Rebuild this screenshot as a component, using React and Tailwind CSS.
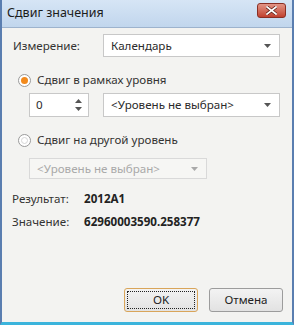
import React from 'react';

const Arrow = ({ className = '' }) => (
  <svg width="7" height="4" viewBox="0 0 7 4" className={className}>
    <path d="M0 0h7L3.5 4z" fill="currentColor" />
  </svg>
);

const Radio = ({ checked }) => (
  <span className="w-[13px] h-[13px] rounded-full border border-[#9a9a9a] bg-white flex items-center justify-center">
    {checked ? (
      <span className="w-[7px] h-[7px] rounded-full bg-[#f28a1c]" />
    ) : (
      <span className="w-[7px] h-[7px] rounded-full border border-[#d6d6d6]" />
    )}
  </span>
);

const Select = ({ value, className = '', disabled }) => (
  <div
    className={`flex items-center justify-between border pl-[7px] pr-[8px] ${
      disabled ? 'border-[#d9d9d9] bg-[#f6f6f4] text-[#a9a9a9]' : 'border-[#c8c8c8] bg-white text-[#2b2b2b]'
    } ${className}`}
  >
    <span>{value}</span>
    <Arrow className={disabled ? 'text-[#a9a9a9]' : 'text-[#555]'} />
  </div>
);

export default function App() {
  return (
    <div
      className="w-[294px] h-[325px] flex flex-col bg-[#c7daef] border-l-2 border-r-2 border-l-[#5a7eb0] border-r-[#5a7eb0] border-b-[3px] border-b-[#3bb4dc] text-[11.6px] text-[#333]"
      style={{ fontFamily: '"Noto Sans", "Open Sans", sans-serif' }}
    >
      {/* title bar */}
      <div className="h-[27px] shrink-0 flex items-center justify-between pl-[5px] pr-[6px] bg-gradient-to-b from-[#d6e5f5] to-[#c1d6ed]">
        <span className="text-[12.5px] text-[#1b1b1b]">Сдвиг значения</span>
        <div className="w-[29px] h-[15px] mb-[6px] rounded-[3px] border border-[#8a2f24] bg-gradient-to-b from-[#e29486] to-[#c0402f] flex items-center justify-center">
          <svg width="11" height="9" viewBox="0 0 11 9">
            <path d="M1 1l9 7M10 1l-9 7" stroke="#5a1a12" strokeWidth="3.2" strokeLinecap="square" />
            <path d="M1 1l9 7M10 1l-9 7" stroke="#fff" strokeWidth="1.8" strokeLinecap="square" />
          </svg>
        </div>
      </div>

      {/* content */}
      <div className="flex-1 flex flex-col bg-[#f3f3f1] border-t border-[#9db3cd] pl-[10px] pr-[8px] pt-[6px] pb-[10px]">
        <div className="flex items-center h-[23px]">
          <span className="w-[91px] pl-[1px]">Измерение:</span>
          <Select value="Календарь" className="w-[177px] h-[23px]" />
        </div>

        <div className="flex items-center gap-[6px] mt-[16px] pl-[6px] h-[14px]">
          <Radio checked />
          <span>Сдвиг в рамках уровня</span>
        </div>

        <div className="flex items-center mt-[6px] pl-[17px] h-[24px]">
          <div className="w-[60px] h-[24px] border border-[#c8c8c8] bg-white flex items-center justify-between pl-[6px] pr-[6px] text-[#2b2b2b]">
            <span>0</span>
            <div className="flex flex-col gap-[4px] text-[#555]">
              <Arrow className="rotate-180" />
              <Arrow />
            </div>
          </div>
          <Select value="<Уровень не выбран>" className="w-[177px] h-[24px] ml-[14px]" />
        </div>

        <div className="flex items-center gap-[6px] mt-[16px] pl-[6px] h-[14px]">
          <Radio />
          <span>Сдвиг на другой уровень</span>
        </div>

        <div className="mt-[11px] pl-[17px]">
          <Select value="<Уровень не выбран>" disabled className="w-[178px] h-[21px]" />
        </div>

        <div className="flex items-center mt-[12px] h-[16px]">
          <span className="w-[72px]">Результат:</span>
          <span className="font-bold text-[#222]">2012A1</span>
        </div>
        <div className="flex items-center mt-[7px] h-[16px]">
          <span className="w-[72px]">Значение:</span>
          <span className="font-bold text-[#222]">62960003590.258377</span>
        </div>

        <div className="mt-auto flex justify-end gap-[11px] pr-[1px]">
          <button className="w-[74px] h-[24px] rounded-[3px] border border-[#d9a55a] bg-gradient-to-b from-[#f3f3f3] to-[#e2e2e2] p-[2px]">
            <span className="w-full h-full flex items-center justify-center border border-dotted border-[#222] text-[#222]">OK</span>
          </button>
          <button className="w-[74px] h-[24px] rounded-[3px] border border-[#9c9c9c] bg-gradient-to-b from-[#f3f3f3] to-[#e2e2e2] flex items-center justify-center text-[#222]">
            Отмена
          </button>
        </div>
      </div>
    </div>
  );
}
